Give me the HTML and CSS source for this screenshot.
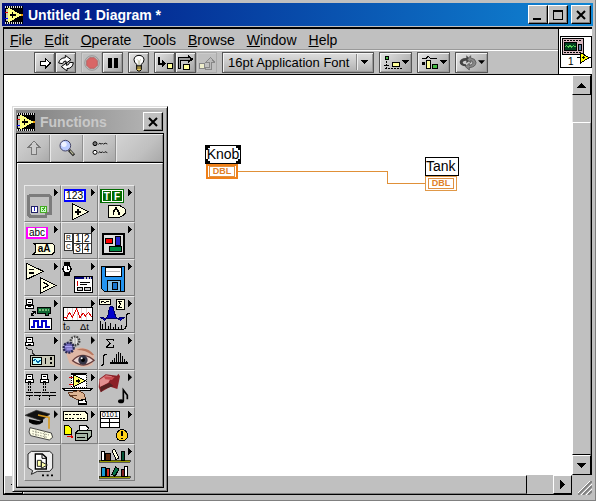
FILE: index.html
```html
<!DOCTYPE html>
<html lang="en">
<head>
<meta charset="utf-8">
<title>Untitled 1 Diagram *</title>
<link rel="stylesheet" href="styles.css">
</head>
<body>
<svg width="0" height="0" class="defs" aria-hidden="true">
  <defs>
    <symbol id="more" viewBox="0 0 108 108"><path d="M90 7L102 19L90 31Z" fill="#000"/></symbol>
    <symbol id="lv" viewBox="0 0 54 54">
      <path d="M0 0H54V54H0Z" fill="#000"/>
      <path d="M0 3H54M0 51H54" stroke="#ddd" stroke-width="5" stroke-dasharray="3 3"/>
      <path d="M3 8H10V46H3Z" fill="#c8c8b8"/>
      <path d="M0 18H10" stroke="#d00" stroke-width="3"/><path d="M0 36H10" stroke="#00f" stroke-width="3"/>
      <path d="M10 5L51 27L10 49Z" fill="#ffff80"/>
      <path d="M14 27H32M23 18V36" stroke="#000" stroke-width="4"/><path d="M47 27H54" stroke="#e90" stroke-width="4"/>
    </symbol>
    <symbol id="plug" viewBox="0 0 28 30"><path d="M5 2H23V17H5ZM2 19H26V27H2Z" fill="#fff" stroke="#000" stroke-width="3"/><path d="M9 9H19M8 23H17" stroke="#000" stroke-width="3"/></symbol>
  </defs>
</svg>
<div class="window">
  <header class="titlebar">
    <svg class="app-icon" width="18" height="18" aria-hidden="true"><use href="#lv"/></svg>
    <h1>Untitled 1 Diagram *</h1>
    <div class="caption-buttons">
      <button class="cap" aria-label="Minimize"><svg width="12" height="12"><path d="M1 9H9V11H1Z"/></svg></button>
      <button class="cap" aria-label="Maximize"><svg width="12" height="12"><path d="M1 1H11V11H1ZM2 3V10H10V3Z" fill-rule="evenodd"/></svg></button>
      <button class="cap close" aria-label="Close"><svg class="smooth" width="12" height="12"><path d="M2 2L10 10M10 2L2 10" stroke="#000" stroke-width="2"/></svg></button>
    </div>
  </header>
  <div class="head">
    <div class="bars">
      <nav class="menu">
        <a href="#"><u>F</u>ile</a><a href="#"><u>E</u>dit</a><a href="#"><u>O</u>perate</a><a href="#"><u>T</u>ools</a><a href="#"><u>B</u>rowse</a><a href="#"><u>W</u>indow</a><a href="#"><u>H</u>elp</a>
      </nav>
      <div class="toolbar">
        <div class="group">
          <button class="tool" aria-label="Run"><svg width="18" height="18" viewBox="0 0 54 54"><path d="M12 22H27V12L43 27L27 43V33H12Z" fill="#fff" stroke="#000" stroke-width="3"/></svg></button>
          <button class="tool" aria-label="Run continuously"><svg class="smooth" width="18" height="18" viewBox="0 0 54 54"><path d="M5 27Q8 12 25 11V4L42 17L27 28V21Q19 20 17 29ZM49 26Q47 43 30 44V51L13 38L28 27V34Q36 34 38 25Z" fill="#fff" stroke="#000" stroke-width="3"/></svg></button>
        </div>
        <div class="group">
          <button class="tool flat" aria-label="Abort"><svg class="smooth" width="18" height="18" viewBox="0 0 54 54"><circle cx="27" cy="27" r="22" fill="#bbb" stroke="#888" stroke-width="2"/><path d="M20 11H34L43 20V34L34 43H20L11 34V20Z" fill="#d96666" stroke="#a55" stroke-width="2"/></svg></button>
          <button class="tool" aria-label="Pause"><svg width="18" height="18"><path d="M4 4H8V14H4ZM10 4H14V14H10Z"/></svg></button>
        </div>
        <button class="tool" aria-label="Highlight execution"><svg class="smooth" width="18" height="18" viewBox="0 0 54 54"><path d="M20 36V31Q12 25 12 17Q13 5 27 4Q41 5 42 17Q42 25 34 31V36Z" fill="#fff" stroke="#000" stroke-width="3"/><path d="M21 16L25 20V34M33 16L29 20V34" stroke="#aa8" stroke-width="2" fill="none"/><path d="M20 36H34V47L30 51H24L20 47Z" fill="#eed060" stroke="#000" stroke-width="3"/><path d="M20 42H34" stroke="#000" stroke-width="2"/></svg></button>
        <div class="group">
          <button class="tool" aria-label="Step into"><svg width="18" height="18" viewBox="0 0 54 54"><path d="M8 9V30H23" fill="none" stroke="#000" stroke-width="6"/><path d="M19 19L30 30L19 41Z"/><path d="M33 28H50V44H33Z" fill="#ff9" stroke="#000" stroke-width="3"/></svg></button>
          <button class="tool" aria-label="Step over"><svg width="18" height="18" viewBox="0 0 54 54"><path d="M7 44V15H35" fill="none" stroke="#000" stroke-width="11"/><path d="M33 2L49 15L33 29Z"/><path d="M7 42V15H38" fill="none" stroke="#999" stroke-width="4"/><path d="M20 30H37V45H20Z" fill="#ff9" stroke="#000" stroke-width="3"/></svg></button>
          <button class="tool flat" aria-label="Step out"><svg width="18" height="18" viewBox="0 0 54 54"><path d="M3 28H20V43H3Z" fill="#eec" stroke="#888" stroke-width="3"/><path d="M22 39H33V24H25L37 10L49 24H41V46H22Z" fill="#bbb" stroke="#888" stroke-width="3"/></svg></button>
        </div>
        <div class="font">
          <select aria-label="Text settings"><option>16pt Application Font</option></select>
          <svg class="font-arrow" width="18" height="18" aria-hidden="true"><path d="M1 1V17" stroke="#888"/><path d="M2 1V17" stroke="#eee"/><path d="M6 7H13L10 11H9Z"/></svg>
        </div>
        <button class="tool wide" aria-label="Align objects"><svg width="28" height="18" viewBox="0 0 84 54"><path d="M9 8H18V17H9Z" fill="#4b4" stroke="#000" stroke-width="3"/><path d="M13 21V42M6 35H20M9 43H60" stroke="#000" stroke-width="3" stroke-dasharray="6 3"/><path d="M30 25H52V37H30Z" fill="#ff9" stroke="#000" stroke-width="3"/><path d="M59 19H80L70 30Z"/></svg></button>
        <button class="tool wide" aria-label="Distribute objects"><svg width="28" height="18" viewBox="0 0 84 54"><path d="M6 12H20L25 7L30 12H50" fill="none" stroke="#000" stroke-width="3"/><path d="M6 24H14V33H6Z"/><path d="M20 20H30V42H20Z" fill="#ff9" stroke="#000" stroke-width="3"/><path d="M36 30H51V42H36Z" fill="#4b4" stroke="#000" stroke-width="3"/><path d="M60 19H81L71 30Z"/></svg></button>
        <button class="tool wide" aria-label="Reorder"><svg class="smooth" width="28" height="18" viewBox="0 0 84 54"><path d="M24 37Q5 36 5 23Q9 11 25 12V4L38 17L25 28V20Q15 19 14 26Q16 31 24 31Z" fill="#444"/><path d="M38 5L27 17L38 26V20Q44 21 45 27Q44 33 34 34V28L22 38L34 48V41Q54 39 54 25Q52 13 38 12Z" fill="#888" stroke="#444" stroke-width="2"/><path d="M60 19H81L71 30Z"/></svg></button>
      </div>
    </div>
    <div class="vi">
      <svg width="32" height="32" viewBox="0 0 96 96" role="img" aria-label="VI icon 1">
        <path d="M1 1H95V95H1Z" fill="#fff" stroke="#000" stroke-width="3"/>
        <path d="M7 6H69V54H7Z" fill="#d8b8c0" stroke="#000" stroke-width="3"/>
        <path d="M13 20H48V43H13Z" fill="#004020" stroke="#000" stroke-width="3"/><path d="M15 33L20 28L25 34L30 28L35 34L40 28L46 33" fill="none" stroke="#5c5" stroke-width="3"/>
        <path d="M54 24H64V43H54Z" fill="#68a" stroke="#000" stroke-width="3"/><path d="M12 13H64M12 49H60" stroke="#000" stroke-width="3" stroke-dasharray="6 3"/>
        <path d="M50 65H94" stroke="#000" stroke-width="4"/><path d="M60 49L87 65L60 82Z" fill="#ff0" stroke="#000" stroke-width="3"/><path d="M65 65H75M70 60V70" stroke="#000" stroke-width="3"/>
        <text x="24" y="86" font-size="30">1</text>
      </svg>
    </div>
  </div>
  <main class="work">
    <section class="canvas" aria-label="Block diagram">
      <svg class="wire" width="188" height="14" aria-hidden="true"><path d="M0 1H150V13H188V14H149V2H0Z" fill="#e09038"/></svg>
      <div class="node knob">
        <div class="label">Knob<i class="c tl"></i><i class="c tr"></i><i class="c bl"></i><i class="c br"></i></div>
        <div class="terminal"><span>DBL</span></div>
      </div>
      <div class="node tank">
        <div class="label">Tank</div>
        <div class="terminal"><span>DBL</span></div>
      </div>
    </section>
    <div class="vscroll">
      <button class="sb" aria-label="Scroll up"><svg width="9" height="5"><path d="M4 0H5L9 5H0Z"/></svg></button>
      <div class="vtrack"></div><div class="vthumb"></div>
      <button class="sb" aria-label="Scroll down"><svg width="9" height="5"><path d="M0 0H9L5 5H4Z"/></svg></button>
    </div>
    <div class="hscroll">
      <button class="sb" aria-label="Scroll left"><svg width="5" height="9"><path d="M5 0V9L0 5V4Z"/></svg></button>
      <div class="hthumb"></div><div class="htrack"></div>
      <button class="sb" aria-label="Scroll right"><svg width="5" height="9"><path d="M0 0V9L5 5V4Z"/></svg></button>
    </div>
    <div class="grip"><svg class="smooth" width="14" height="14"><path d="M0 14L14 0M5 14L14 5M10 14L14 10" stroke="#808080" stroke-width="2"/><path d="M-2 14L14 -2M3 14L14 3M8 14L14 8" stroke="#fff"/></svg></div>
  </main>
</div>

<aside class="palette" aria-label="Functions palette">
  <header class="ptitle">
    <svg class="app-icon" width="18" height="18" aria-hidden="true"><use href="#lv"/></svg>
    <h2>Functions</h2>
    <button class="cap" aria-label="Close palette"><svg class="smooth" width="12" height="12"><path d="M2 2L10 10M10 2L2 10" stroke="#000" stroke-width="2"/></svg></button>
  </header>
  <div class="pbody">
    <div class="ptools">
      <button class="pt" aria-label="Up to owning palette"><svg width="18" height="18" viewBox="0 0 54 54"><path d="M27 6L45 26H34V46H20V26H9Z" fill="#ccc" stroke="#777" stroke-width="3"/></svg></button>
      <button class="pt" aria-label="Search"><svg class="smooth" width="18" height="18" viewBox="0 0 54 54"><path d="M33 33L48 49" stroke="#222" stroke-width="9"/><path d="M36 35L46 46" stroke="#bb9" stroke-width="4"/><circle cx="22" cy="20" r="16" fill="#bbccff" stroke="#446" stroke-width="3"/><circle cx="18" cy="16" r="8" fill="#eef2ff"/></svg></button>
      <button class="pt" aria-label="Options"><svg class="smooth" width="18" height="18" viewBox="0 0 54 54"><circle cx="12" cy="14" r="6" fill="#777" stroke="#000" stroke-width="3"/><circle cx="12" cy="40" r="6" fill="#fff" stroke="#000" stroke-width="3"/><path d="M22 16L27 12L30 16L34 12L38 16L42 12L49 15M22 42L27 38L30 42L34 38L38 42L42 38L49 41" fill="none" stroke="#222" stroke-width="3"/></svg></button>
      <span class="pt"></span>
    </div>
    <div class="grid">
      <button class="cell" aria-label="Structures"><svg viewBox="0 0 108 108"><use href="#more"/><path d="M80 78V38Q80 28 70 28H22Q12 28 12 38V80Q12 91 22 91H70M62 82H84" fill="none" stroke="#7c7c7c" stroke-width="9"/><path d="M22 60H40V80H22Z" fill="#fff" stroke="#226" stroke-width="3"/><path d="M31 64V76" stroke="#22c" stroke-width="4"/><path d="M50 60H68V80H50Z" fill="#cfc" stroke="#4a2" stroke-width="3"/><path d="M55 65L63 75M63 65L55 75" stroke="#4a2" stroke-width="3"/></svg></button>
      <button class="cell" aria-label="Numeric"><svg viewBox="0 0 108 108"><use href="#more"/><path d="M10 11H72V45H10Z" fill="#fff" stroke="#00f" stroke-width="5"/><text x="15" y="39" font-size="31">123</text><path d="M35 53L83 77L35 101Z" fill="#ffffe0" stroke="#000" stroke-width="3"/><path d="M42 77H60M51 68V86" stroke="#000" stroke-width="5"/></svg></button>
      <button class="cell" aria-label="Boolean"><svg viewBox="0 0 108 108"><use href="#more"/><path d="M6 9H78V51H6Z" fill="#006a00"/><path d="M12 14H72V46H12Z" fill="none" stroke="#fff" stroke-width="3"/><path d="M41 14V46" stroke="#fff" stroke-width="3"/><text x="17" y="41" font-size="30" font-weight="bold" fill="#fff">T</text><text x="48" y="41" font-size="30" font-weight="bold" fill="#fff">F</text><path d="M32 59H66L80 67L84 76L80 85L66 93H32Z" fill="#ffffe0" stroke="#000" stroke-width="3"/><path d="M46 86V78L54 66L62 78V86" fill="none" stroke="#000" stroke-width="5"/></svg></button>

      <button class="cell" aria-label="String"><svg viewBox="0 0 108 108"><use href="#more"/><path d="M8 13H69V45H8Z" fill="#fff" stroke="#f0f" stroke-width="5"/><text x="15" y="38" font-size="30">abc</text><path d="M28 60H84L92 67V87L84 94H28L35 87V67Z" fill="#ffffe0" stroke="#000" stroke-width="3"/><text x="41" y="88" font-size="30" font-weight="bold">aA</text></svg></button>
      <button class="cell" aria-label="Array"><svg viewBox="0 0 108 108"><use href="#more"/><path d="M11 31H33V82H11ZM11 56H33M38 31H91V91H38ZM64 31V91M38 61H91" fill="#fff" stroke="#333" stroke-width="3"/><text x="15" y="51" font-size="20">R</text><text x="15" y="77" font-size="20">C</text><text x="43" y="57" font-size="30">1</text><text x="69" y="57" font-size="30">2</text><text x="43" y="87" font-size="30">3</text><text x="69" y="87" font-size="30">4</text></svg></button>
      <button class="cell" aria-label="Cluster"><svg viewBox="0 0 108 108"><use href="#more"/><path d="M15 33H78V92H15Z" fill="#ddd" stroke="#000" stroke-width="6"/><path d="M22 46H43V61H22Z" fill="#f00" stroke="#000" stroke-width="3"/><path d="M52 40H68V66H52Z" fill="#22c" stroke="#000" stroke-width="3"/><path d="M34 70H71V84H34Z" fill="#084" stroke="#000" stroke-width="3"/></svg></button>

      <button class="cell" aria-label="Comparison"><svg viewBox="0 0 108 108"><use href="#more"/><path d="M6 9L58 34L6 59ZM50 53L96 76L50 99Z" fill="#ffffe0" stroke="#000" stroke-width="3"/><path d="M15 29H29M15 39H29" stroke="#000" stroke-width="4"/><path d="M58 67L73 76L58 85" fill="none" stroke="#000" stroke-width="4"/></svg></button>
      <button class="cell" aria-label="Time and dialog"><svg viewBox="0 0 108 108"><use href="#more"/><path d="M9 6H27V48H9Z"/><circle cx="18" cy="27" r="12" fill="#fff" stroke="#000" stroke-width="4"/><path d="M18 19V27H24" fill="none" stroke="#000" stroke-width="3"/><path d="M40 48H95V98H40Z" fill="#fff" stroke="#000" stroke-width="3"/><path d="M42 50H94V58H42Z" fill="#007"/><path d="M70 54H92" stroke="#ccc" stroke-width="4" stroke-dasharray="5 3"/><path d="M50 64V78" stroke="#c00" stroke-width="4"/><path d="M58 66H86M58 74H78" stroke="#000" stroke-width="3"/><path d="M48 83H64V92H48ZM71 83H87V92H71Z" fill="#ccc" stroke="#000" stroke-width="3"/></svg></button>
      <button class="cell" aria-label="File I/O"><svg viewBox="0 0 108 108"><use href="#more"/><path d="M10 20H80V94H19L10 85Z" fill="#2394f0" stroke="#000" stroke-width="3"/><path d="M21 21H69V49H21Z" fill="#fff" stroke="#000" stroke-width="3"/><path d="M25 34H65" stroke="#bbb" stroke-width="3"/><path d="M27 62H66V93H27Z" fill="#80bfe8" stroke="#000" stroke-width="3"/><path d="M44 67H57V88H44Z" fill="#1677d0" stroke="#000" stroke-width="3"/></svg></button>

      <button class="cell" aria-label="Data acquisition"><svg viewBox="0 0 108 108"><use href="#more"/><use href="#plug" x="3" y="6" width="28" height="30"/><path d="M22 55L33 43M22 47V55H30M25 43H33V50" fill="none" stroke="#000" stroke-width="3"/><path d="M40 31H80V50H72V54H64V50H40Z" fill="#163" stroke="#000" stroke-width="3"/><path d="M45 39H75" stroke="#7b7" stroke-width="4" stroke-dasharray="5 4"/><path d="M16 64H81V98H16Z" fill="#fff" stroke="#000" stroke-width="3"/><path d="M21 90H30V72H42V90H54V72H66V90H77" fill="none" stroke="#00c" stroke-width="4"/></svg></button>
      <button class="cell" aria-label="Waveform"><svg viewBox="0 0 108 108"><use href="#more"/><path d="M7 31H95V70H7Z" fill="#fff" stroke="#000" stroke-width="3"/><path d="M20 33V68M34 33V68M48 33V68M62 33V68M76 33V68" stroke="#d7b8b8" stroke-width="2"/><path d="M9 61L16 63L26 46L34 62L47 35L57 62L66 48L73 57L82 46L94 61" fill="none" stroke="#d00" stroke-width="3"/><text x="6" y="98" font-size="30">t</text><text x="15" y="99" font-size="21">o</text><text x="57" y="99" font-size="28">Δt</text></svg></button>
      <button class="cell" aria-label="Analyze"><svg viewBox="0 0 108 108"><use href="#more"/><path d="M5 7H38V23H5ZM55 7H78V37H55Z" fill="#ffffe0" stroke="#000" stroke-width="3"/><path d="M9 16L15 12L21 18L27 12L34 16" fill="none" stroke="#000" stroke-width="3"/><path d="M73 12H61L68 22L61 31H73" fill="none" stroke="#000" stroke-width="3"/><path d="M6 60L15 60L21 66L29 59L34 33Q40 24 46 33L53 60L61 66L68 60H80L67 70L56 63H28L20 70Z" fill="#00c" stroke="#006" stroke-width="3"/><path d="M7 98V72M14 98V82M22 98V76M30 98V86M38 98V77M45 98V89M53 98V81M61 98V90M69 98V85M5 98H78" stroke="#000" stroke-width="3"/><path d="M97 49H91L86 54V84L82 93H77" fill="none" stroke="#000" stroke-width="3"/></svg></button>

      <button class="cell" aria-label="Instrument I/O"><svg viewBox="0 0 108 108"><use href="#more"/><use href="#plug" x="3" y="7" width="28" height="30"/><path d="M7 38Q5 47 18 45Q29 45 25 58L34 64" fill="none" stroke="#333" stroke-width="3"/><path d="M19 64H92V98H19Z" fill="#c9c9b8" stroke="#000" stroke-width="3"/><path d="M25 69H52V92H25Z" fill="#bff" stroke="#000" stroke-width="3"/><path d="M28 82L33 75L42 86L49 78" fill="none" stroke="#06a" stroke-width="3"/><path d="M64 71V91" stroke="#000" stroke-width="5"/><path d="M81 70V79M81 84V91" stroke="#000" stroke-width="5"/></svg></button>
      <button class="cell" aria-label="Motion and vision"><svg class="smooth" viewBox="0 0 108 108"><path d="M15 58Q65 20 101 66L94 93Q60 108 25 87Z" fill="#dfb7a5"/><path d="M47 48Q76 35 99 62L94 64Q75 48 47 48Z" fill="#b8775f"/><path d="M35 80Q52 61 73 65Q86 67 99 79L91 85Q66 103 35 80Z" fill="#ead5d2" stroke="#653c3c" stroke-width="4"/><circle cx="66" cy="78" r="14" fill="#334"/><circle cx="66" cy="78" r="6" fill="#000"/><circle cx="62" cy="73" r="3" fill="#fff"/><circle cx="42" cy="21" r="13" fill="#bbb" stroke="#444" stroke-width="7" stroke-dasharray="5 3"/><path d="M38 9V28M46 12V30" stroke="#eee" stroke-width="3"/><circle cx="23" cy="41" r="15" fill="#7068b8" stroke="#282850" stroke-width="7" stroke-dasharray="6 3"/><path d="M12 38H33M17 45H35" stroke="#b8b0ff" stroke-width="3"/><use href="#more"/></svg></button>
      <button class="cell" aria-label="Mathematics"><svg viewBox="0 0 108 108"><use href="#more"/><path d="M46 22V16H25L37 28L25 41H46V34" fill="none" stroke="#000" stroke-width="4"/><path d="M26 61H21L17 66V89L13 95H8" fill="none" stroke="#000" stroke-width="3"/><path d="M37 87H91M43 87V78M49 87V72M55 87V61M61 87V54M67 87V58M73 87V65M79 87V75M85 87V80" stroke="#000" stroke-width="4"/></svg></button>

      <button class="cell" aria-label="Communication"><svg viewBox="0 0 108 108"><use href="#more"/><use href="#plug" x="3" y="7" width="28" height="30"/><use href="#plug" x="48" y="7" width="28" height="30"/><path d="M14 37V62M20 37V62M59 37V62M65 37V62" stroke="#000" stroke-width="3" stroke-dasharray="6 3"/><path d="M5 64H96M5 72H96" fill="none" stroke="#000" stroke-width="3" stroke-dasharray="21 3"/><path d="M17 72V86M47 72V86M77 72V86" stroke="#000" stroke-width="3" stroke-dasharray="6 3"/></svg></button>
      <button class="cell" aria-label="Application control"><svg viewBox="0 0 108 108"><use href="#more"/><path d="M31 9H76V50H31Z" fill="#fff" stroke="#000" stroke-width="4" stroke-dasharray="4 2"/><path d="M25 19H38M25 39H38" stroke="#d00" stroke-width="3"/><path d="M36 10L74 29L36 48Z" fill="#ff6" stroke="#000" stroke-width="3"/><path d="M46 30H58M52 24V36" stroke="#000" stroke-width="4"/><path d="M3 51H95L88 57H10Z" fill="#fff" stroke="#000" stroke-width="3"/><path d="M22 66L54 59L69 68L74 84L64 90L45 84L29 76L49 73L25 72Z" fill="#dfb695" stroke="#653b22" stroke-width="3"/><path d="M53 90L73 84L77 99H53Z" fill="#fff" stroke="#000" stroke-width="4"/></svg></button>
      <button class="cell" aria-label="Graphics and sound"><svg class="smooth" viewBox="0 0 108 108"><path d="M4 24L23 10L57 14L61 8L66 16L58 54L37 47L8 64L2 49Z" fill="#8c2027"/><path d="M4 27L24 13L42 16L31 35L6 48Z" fill="#e09090"/><path d="M17 16L50 18L42 27L22 25Z" fill="#c74b50"/><path d="M7 48L35 35L46 45L18 55L9 63Z" fill="#522"/><ellipse cx="69" cy="91" rx="9" ry="6"/><path d="M76 91V57L88 73V85" fill="none" stroke="#000" stroke-width="5"/><use href="#more"/></svg></button>

      <button class="cell" aria-label="Tutorial"><svg class="smooth" viewBox="0 0 108 108"><use href="#more"/><path d="M3 22L37 7L78 18L52 38Z" fill="#111" stroke="#333" stroke-width="2"/><path d="M15 33V43Q38 58 57 43V34L48 40Z"/><path d="M42 21L75 28V62" fill="none" stroke="#d79b22" stroke-width="5"/><path d="M18 59L82 75L86 88L76 96L20 83L15 72Z" fill="#ffffe8" stroke="#444" stroke-width="3"/><path d="M25 69L75 81M25 77L70 88M36 63V84M62 70V91" stroke="#998" stroke-width="3" stroke-dasharray="5 3"/></svg></button>
      <button class="cell" aria-label="Report generation"><svg viewBox="0 0 108 108"><use href="#more"/><path d="M8 10H71L80 19V38H8Z" fill="#ffffe0" stroke="#000" stroke-width="3"/><path d="M13 18H30M36 18H60M13 30H40M47 30H72" stroke="#000" stroke-width="3" stroke-dasharray="7 3"/><path d="M10 53H23L30 60V79H10Z" fill="#ff0" stroke="#000" stroke-width="3"/><path d="M17 86H34" stroke="#d00" stroke-width="4"/><path d="M29 79L38 86L29 93Z" fill="#d00"/><path d="M54 73L57 52H74L82 60L77 74Z" fill="#fff" stroke="#000" stroke-width="3"/><path d="M42 76L52 67H91V85L79 96H42Z" fill="#a8b8a8" stroke="#000" stroke-width="3"/><path d="M43 77H80V95M48 88H71" fill="none" stroke="#000" stroke-width="4"/></svg></button>
      <button class="cell" aria-label="Advanced"><svg viewBox="0 0 108 108"><use href="#more"/><path d="M7 9H63V57H7ZM7 31H63M7 44H63M35 31V57" fill="#fff" stroke="#000" stroke-width="3"/><text x="11" y="28" font-size="22">0101</text><circle cx="72" cy="82" r="17" fill="#ffd119" stroke="#000" stroke-width="3"/><path d="M72 70V85M72 89V94" stroke="#000" stroke-width="6"/></svg></button>

      <button class="cell" aria-label="Select a VI"><svg class="smooth" viewBox="0 0 108 108"><path d="M22 19H77L86 27V69L77 79H40L22 88L26 77L12 68V27Z" fill="#eee" stroke="#222" stroke-width="3"/><path d="M34 27H55L67 38V72H34Z" fill="#fff" stroke="#000" stroke-width="4"/><path d="M54 28V40H66" fill="none" stroke="#000" stroke-width="3"/><path d="M40 46H52V64H40ZM52 50L70 60L52 70Z" fill="#ffa" stroke="#222" stroke-width="3"/><path d="M54 91H60M68 91H74M81 91H87" stroke="#000" stroke-width="5"/></svg></button>
      <span class="blank"></span>
      <button class="cell" aria-label="User libraries"><svg viewBox="0 0 108 108"><use href="#more"/><path d="M3 46H96V51H3ZM3 94H96V99H3Z" fill="#999d00" stroke="#222" stroke-width="2"/><path d="M10 18H20V45H10Z" fill="#fff" stroke="#000" stroke-width="3"/><path d="M22 25H36V45H22Z" fill="#5d260b" stroke="#000" stroke-width="3"/><path d="M42 16L50 12L63 39L54 44Z" fill="#ffd" stroke="#000" stroke-width="3"/><path d="M70 20H79V45H70Z" fill="#075438" stroke="#000" stroke-width="3"/><path d="M9 68H22V94H9Z" fill="#159bd5" stroke="#000" stroke-width="3"/><path d="M24 71H35V94H24Z" fill="#d62c20" stroke="#000" stroke-width="3"/><path d="M53 66L63 72L51 94L42 88Z" fill="#077044" stroke="#000" stroke-width="3"/><path d="M69 73H79V94H69Z" fill="#812020" stroke="#000" stroke-width="3"/><path d="M80 64H88V94H80Z" fill="#fff" stroke="#000" stroke-width="3"/></svg></button>
    </div>
  </div>
</aside>
</body>
</html>
```
FILE: styles.css
```css
* { box-sizing: border-box; }
body {
  margin: 0;
  min-height: 100vh;
  position: relative;
  background: #c0c0c0;
  color: #000;
  font: 14px/18px "Liberation Sans", Arial, sans-serif;
}
button, select { font: inherit; color: inherit; margin: 0; padding: 0; border-radius: 0; }
h1, h2 { margin: 0; font-size: 14px; line-height: 18px; font-weight: bold; }
svg { display: block; shape-rendering: crispEdges; font-family: "Liberation Sans", Arial, sans-serif; }
.smooth { shape-rendering: auto; }
.defs { position: absolute; }

.window {
  display: flex;
  flex-direction: column;
  height: 100vh;
  padding: 3px 2px 5px;
  border-right: 1px solid #808080;
  border-bottom: 1px solid #808080;
}
.titlebar {
  display: flex;
  align-items: center;
  height: 23px;
  padding: 0 2px 0 3px;
  gap: 5px;
  color: #fff;
  background: linear-gradient(90deg, #001080, #1086d4);
}
.titlebar h1 { flex: 1; }
.caption-buttons { display: flex; }
.cap {
  display: grid;
  place-items: center;
  width: 20px;
  height: 19px;
  background: #c0c0c0;
  border: 1px solid;
  border-color: #fff #000 #000 #fff;
  box-shadow: inset -1px -1px #808080;
}
.close { margin-left: 3px; }

.head {
  display: flex;
  margin: 1px 1px 0;
  border: solid #000;
  border-width: 2px 0 1px 1px;
}
.bars { flex: 1; }
.menu {
  display: flex;
  gap: 12px;
  height: 21px;
  padding: 2px 6px 0;
  border-bottom: 1px solid #999;
}
.menu a { color: inherit; text-decoration: none; }
.toolbar {
  display: flex;
  align-items: center;
  gap: 5px;
  height: 24px;
  padding-left: 30px;
  border-top: 1px solid #fff;
}
.group { display: flex; }
.tool {
  display: grid;
  place-items: center;
  width: 21px;
  height: 21px;
  background: linear-gradient(135deg, #e4e4e4, #c4c4c4 50%, #a4a4a4);
  border: 1px solid #555;
  box-shadow: inset 1px 1px #f4f4f4, inset -1px -1px #999;
}
.tool.flat { background: #c0c0c0; border-color: #aaa; box-shadow: inset 1px 1px #ccc; }
.tool.wide { width: 33px; }
.font { position: relative; width: 152px; height: 21px; }
.font select {
  appearance: none;
  width: 100%;
  height: 21px;
  padding-left: 5px;
  font-size: 13px;
  background: linear-gradient(#dedede, #c8c8c8 50%, #b0b0b0);
  border: 1px solid #555;
  box-shadow: inset 1px 1px #f4f4f4, inset -1px -1px #999;
}
.font-arrow { position: absolute; right: 1px; top: 1px; pointer-events: none; }
.vi {
  display: grid;
  place-items: center;
  width: 34px;
  background: #fff;
  border-left: 1px solid #000;
}

.work {
  flex: 1;
  display: grid;
  grid-template-columns: 1fr 20px;
  grid-template-rows: 1fr 20px;
  margin: 0 1px;
  min-height: 0;
  border: solid #000;
  border-width: 0 0 0 1px;
}
.canvas { position: relative; background: #fff; overflow: hidden; }
.sb {
  display: grid;
  place-items: center;
  flex: none;
  width: 20px;
  height: 20px;
  background: #c0c0c0;
  border: 1px solid;
  border-color: #fff #000 #000 #fff;
}
.vscroll { display: flex; flex-direction: column; background: #c0c0c0; border-right: 1px solid #000; }
.vscroll .sb { width: 100%; }
.vtrack { height: 27px; border-left: 1px solid #e8e8e8; }
.vthumb { flex: 1; border: 1px solid; border-color: #fff #808080 #000 #fff; }
.hscroll { display: flex; background: #c0c0c0; border-bottom: 1px solid #000; }
.hscroll .sb { width: 19px; height: 100%; }
.hthumb { flex: 1; border: 1px solid; border-color: #fff #000 #808080 #fff; }
.htrack { width: 26px; }
.grip { display: flex; align-items: flex-end; justify-content: flex-end; background: #c0c0c0; }

.node { position: absolute; }
.knob { left: 201px; top: 70px; }
.tank { left: 421px; top: 82px; }
.label {
  position: relative;
  width: 34px;
  height: 19px;
  line-height: 17px;
  border: 1px solid #000;
  white-space: nowrap;
}
.knob .label { width: 36px; text-align: center; }
.c { position: absolute; width: 5px; height: 5px; border: 0 solid #000; }
.tl { left: -1px; top: -1px; border-width: 3px 0 0 3px; }
.tr { right: -1px; top: -1px; border-width: 3px 3px 0 0; }
.bl { left: -1px; bottom: -1px; border-width: 0 0 3px 3px; }
.br { right: -1px; bottom: -1px; border-width: 0 3px 3px 0; }
.terminal {
  display: grid;
  width: 32px;
  height: 15px;
  padding: 1px;
  border: 1px solid #e09848;
  background: #fff;
}
.knob .terminal { margin-left: 1px; border-width: 2px; border-color: #f08018; padding: 0; }
.terminal span {
  border: 1px solid #e09040;
  margin: 0 1px;
  text-align: center;
  color: #e08028;
  font-size: 9px;
  line-height: 9px;
  font-weight: bold;
}
.wire { position: absolute; left: 234px; top: 95px; }

.palette {
  position: absolute;
  left: 12px;
  top: 106px;
  width: 156px;
  padding: 3px;
  background: #c0c0c0;
  border: 1px solid;
  border-color: #ddd #000 #000 #ddd;
  box-shadow: inset 1px 1px #fff, inset -1px -1px #808080;
}
.ptitle {
  display: flex;
  align-items: center;
  gap: 5px;
  height: 23px;
  padding: 0 1px;
  color: #c8c8c8;
  background: linear-gradient(90deg, #808080, #b8b8b8);
}
.ptitle h2 { flex: 1; }
.pbody { border: 1px solid #000; }
.ptools { display: grid; grid-template-columns: 33px 33px 33px 1fr; height: 29px; border-bottom: 1px solid #000; }
.pt {
  display: grid;
  place-items: center;
  border: 0;
  background: linear-gradient(135deg, #d4d4d4, #c0c0c0 60%, #a8a8a8);
  box-shadow: inset 1px 1px #e8e8e8, inset -1px -1px #909090;
}
.grid {
  display: grid;
  grid-template-columns: repeat(3, 37px);
  grid-auto-rows: 37px;
  padding: 21px 0 5px 6px;
  border: 1px solid;
  border-color: #fff #808080 #808080 #fff;
}
.cell {
  background: #c0c0c0;
  border: 1px solid;
  border-color: #e8e8e8 #808080 #808080 #e8e8e8;
}
.cell svg { width: 36px; height: 36px; margin: -1px; }
```
